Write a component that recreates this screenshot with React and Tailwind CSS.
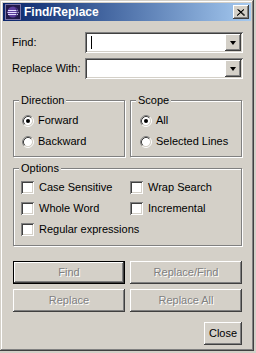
const raised = "shadow-[inset_-1px_-1px_#404040,inset_1px_1px_#ffffff,inset_-2px_-2px_#808080,inset_2px_2px_#d4d0c8]";
const sunken = "shadow-[inset_1px_1px_#808080,inset_-1px_-1px_#ffffff,inset_2px_2px_#404040,inset_-2px_-2px_#d4d0c8]";
const etched = "border border-[#808080] shadow-[inset_1px_1px_#ffffff,1px_1px_#ffffff]";

function TitleIcon() {
    return (
        <svg width="16" height="16" viewBox="0 0 16 16">
            <rect x="0.5" y="0.5" width="15" height="15" fill="#221a4a" stroke="#7a74a8" />
            <circle cx="8" cy="8" r="5.5" fill="#5d3f9e" />
            <path d="M3 6.5h10M2.5 8.5h11M3 10.5h10" stroke="#e4dcff" strokeWidth="1" />
            <path d="M9.5 3a5.5 5.5 0 0 1 0 10a6.5 6.5 0 0 0 0-10z" fill="#2a1f58" />
        </svg>
    );
}

function Radio({ checked }) {
    return (
        <svg width="12" height="12" viewBox="0 0 12 12" className="shrink-0">
            <circle cx="6" cy="6" r="4.2" fill="#ffffff" />
            <path d="M2.11 9.89A5.5 5.5 0 0 1 9.89 2.11" stroke="#808080" fill="none" />
            <path d="M9.89 2.11A5.5 5.5 0 0 1 2.11 9.89" stroke="#ffffff" fill="none" />
            <path d="M2.82 9.18A4.5 4.5 0 0 1 9.18 2.82" stroke="#404040" fill="none" />
            <path d="M9.18 2.82A4.5 4.5 0 0 1 2.82 9.18" stroke="#d4d0c8" fill="none" />
            {checked && <circle cx="6" cy="6" r="2" fill="#000000" />}
        </svg>
    );
}

function Check({ label, className }) {
    return (
        <div className={`flex h-[21px] items-center gap-[5px] whitespace-nowrap ${className || ""}`}>
            <div className={`h-[13px] w-[13px] shrink-0 bg-white ${sunken}`}></div>
            <span>{label}</span>
        </div>
    );
}

function Combo({ cursor }) {
    return (
        <div className={`flex h-[21px] w-[158px] items-center bg-white p-[2px] ${sunken}`}>
            <div className="flex flex-1 items-center pl-[4px]">
                {cursor && <div className="h-[13px] w-[1px] bg-black"></div>}
            </div>
            <div className={`flex h-[17px] w-[16px] items-center justify-center bg-[#d4d0c8] ${raised}`}>
                <div className="h-0 w-0 border-x-[3.5px] border-t-[4px] border-x-transparent border-t-black"></div>
            </div>
        </div>
    );
}

function Group({ title, className, children }) {
    return (
        <div className={`relative ${etched} ${className}`}>
            <span className="absolute left-[5px] top-[-7px] bg-[#d4d0c8] px-[2px] leading-[13px]">{title}</span>
            {children}
        </div>
    );
}

function Btn({ label, primary, disabled, className }) {
    return (
        <button
            className={`flex h-[23px] items-center justify-center bg-[#d4d0c8] ${raised} ${primary ? "border border-black" : ""} ${disabled ? "text-[#808080] [text-shadow:1px_1px_#ffffff]" : "text-black"} ${className || ""}`}
        >
            {label}
        </button>
    );
}

export default function App() {
    return (
        <div className="h-[353px] w-[256px] bg-[#d4d0c8] text-[11px] leading-[13px] text-black [font-family:'Liberation_Sans',Arial,sans-serif]">
            <div className="flex h-[351px] w-[254px] flex-col p-[3px] shadow-[inset_-1px_-1px_#404040,inset_1px_1px_#d4d0c8,inset_-2px_-2px_#808080,inset_2px_2px_#ffffff]">
                <div className="flex h-[18px] items-center bg-linear-to-r from-[#0a246a] to-[#a6caf0] pl-[2px] pr-[2px]">
                    <TitleIcon />
                    <span className="ml-[3px] flex-1 text-[12px] font-bold text-white">Find/Replace</span>
                    <div className={`flex h-[14px] w-[16px] items-center justify-center bg-[#d4d0c8] ${raised}`}>
                        <svg width="8" height="7" viewBox="0 0 8 7">
                            <path d="M0.5 0.5L7 6.5M1.5 0.5L8 6.5M7 0.5L0.5 6.5M6.5 0.5L0 6.5" stroke="#000000" strokeWidth="1" />
                        </svg>
                    </div>
                </div>

                <div className="flex flex-col pl-[10px]">
                    <div className="mt-[11px] flex items-center">
                        <span className="-ml-[1px] w-[73px]">Find:</span>
                        <Combo cursor />
                    </div>
                    <div className="mt-[5px] flex items-center">
                        <span className="-ml-[1px] w-[73px]">Replace With:</span>
                        <Combo />
                    </div>

                    <div className="mt-[21px] flex w-[229px] gap-[5px]">
                        <Group title="Direction" className="h-[57px] w-[112px] pl-[8px] pt-[9px]">
                            <div className="flex h-[21px] items-center gap-[4px]"><Radio checked /><span>Forward</span></div>
                            <div className="flex h-[21px] items-center gap-[4px]"><Radio /><span>Backward</span></div>
                        </Group>
                        <Group title="Scope" className="h-[57px] w-[112px] pl-[9px] pt-[9px]">
                            <div className="flex h-[21px] items-center gap-[4px]"><Radio checked /><span>All</span></div>
                            <div className="flex h-[21px] items-center gap-[4px]"><Radio /><span>Selected Lines</span></div>
                        </Group>
                    </div>

                    <Group title="Options" className="mt-[11px] h-[78px] w-[229px] pl-[7px] pt-[8px]">
                        <div className="grid grid-cols-[109px_1fr]">
                            <Check label="Case Sensitive" />
                            <Check label="Wrap Search" />
                            <Check label="Whole Word" />
                            <Check label="Incremental" />
                            <Check label="Regular expressions" className="col-span-2" />
                        </div>
                    </Group>

                    <div className="mt-[15px] grid w-[229px] grid-cols-2 gap-[5px]">
                        <Btn label="Find" primary disabled />
                        <Btn label="Replace/Find" disabled />
                        <Btn label="Replace" disabled />
                        <Btn label="Replace All" disabled />
                    </div>

                    <div className="mt-[10px] flex w-[229px] justify-end">
                        <Btn label="Close" className="w-[38px]" />
                    </div>
                </div>
            </div>
        </div>
    );
}
